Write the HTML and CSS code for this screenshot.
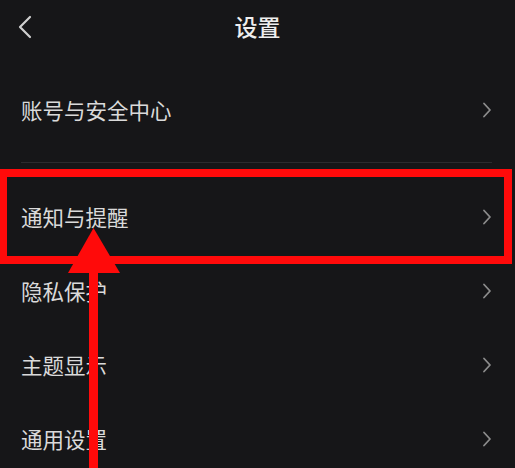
FILE: index.html
```html
<!DOCTYPE html>
<html lang="zh-CN">
<head>
<meta charset="utf-8">
<title>设置</title>
<link rel="stylesheet" href="styles.css">
</head>
<body>
<div class="screen">
  <header class="header">
    <svg class="back" width="16" height="24" viewBox="0 0 16 24"><path d="M13 2 L3 12 L13 22" fill="none" stroke="#cfcfcf" stroke-width="2.2" stroke-linecap="round" stroke-linejoin="round"/></svg>
    <h1 class="title">设置</h1>
  </header>
  <ul class="list">
    <li class="row"><span>账号与安全中心</span><svg class="chev" width="10" height="16" viewBox="0 0 10 16"><path d="M2 1.5 L8 8 L2 14.5" fill="none" stroke="#8c8c8c" stroke-width="1.8" stroke-linecap="round" stroke-linejoin="round"/></svg></li>
    <li class="divider"></li>
    <li class="row"><span>通知与提醒</span><svg class="chev" width="10" height="16" viewBox="0 0 10 16"><path d="M2 1.5 L8 8 L2 14.5" fill="none" stroke="#8c8c8c" stroke-width="1.8" stroke-linecap="round" stroke-linejoin="round"/></svg></li>
    <li class="row"><span>隐私保护</span><svg class="chev" width="10" height="16" viewBox="0 0 10 16"><path d="M2 1.5 L8 8 L2 14.5" fill="none" stroke="#8c8c8c" stroke-width="1.8" stroke-linecap="round" stroke-linejoin="round"/></svg></li>
    <li class="row"><span>主题显示</span><svg class="chev" width="10" height="16" viewBox="0 0 10 16"><path d="M2 1.5 L8 8 L2 14.5" fill="none" stroke="#8c8c8c" stroke-width="1.8" stroke-linecap="round" stroke-linejoin="round"/></svg></li>
    <li class="row"><span>通用设置</span><svg class="chev" width="10" height="16" viewBox="0 0 10 16"><path d="M2 1.5 L8 8 L2 14.5" fill="none" stroke="#8c8c8c" stroke-width="1.8" stroke-linecap="round" stroke-linejoin="round"/></svg></li>
  </ul>
  <div class="highlight"></div>
  <svg class="arrow" width="515" height="468" viewBox="0 0 515 468">
    <polygon points="93.5,228 68,273 120,273" fill="#ff0a0a"/>
    <rect x="89" y="270" width="9" height="200" fill="#ff0a0a"/>
  </svg>
</div>
</body>
</html>
```
FILE: styles.css
```css
html, body {
  margin: 0;
  padding: 0;
  background: #161618;
}
.screen {
  position: relative;
  width: 515px;
  height: 468px;
  overflow: hidden;
  background: #161618;
  font-family: "Noto Sans CJK SC", "Noto Sans", sans-serif;
  color: #dcdcdc;
}
.header {
  height: 55px;
  display: flex;
  align-items: center;
  justify-content: center;
  position: relative;
}
.back {
  position: absolute;
  left: 17px;
  top: 15px;
}
.title {
  margin: 0 0 3px 0;
  font-size: 23px;
  font-weight: 500;
  color: #eeeeee;
  line-height: 1;
}
.list {
  list-style: none;
  margin: 0;
  padding: 18px 0 0 0;
}
.row {
  height: 74px;
  display: flex;
  align-items: center;
  justify-content: space-between;
  padding: 0 23px 0 21px;
  font-size: 21.5px;
  line-height: 1;
  color: #dadada;
}
.divider {
  height: 1px;
  margin: 15px 23px 17px 21px;
  background: #2b2b2e;
}
.highlight {
  position: absolute;
  left: -1px;
  top: 169px;
  width: 497px;
  height: 79px;
  border: 8px solid #ff0a0a;
}
.arrow {
  position: absolute;
  left: 0;
  top: 0;
}
```
